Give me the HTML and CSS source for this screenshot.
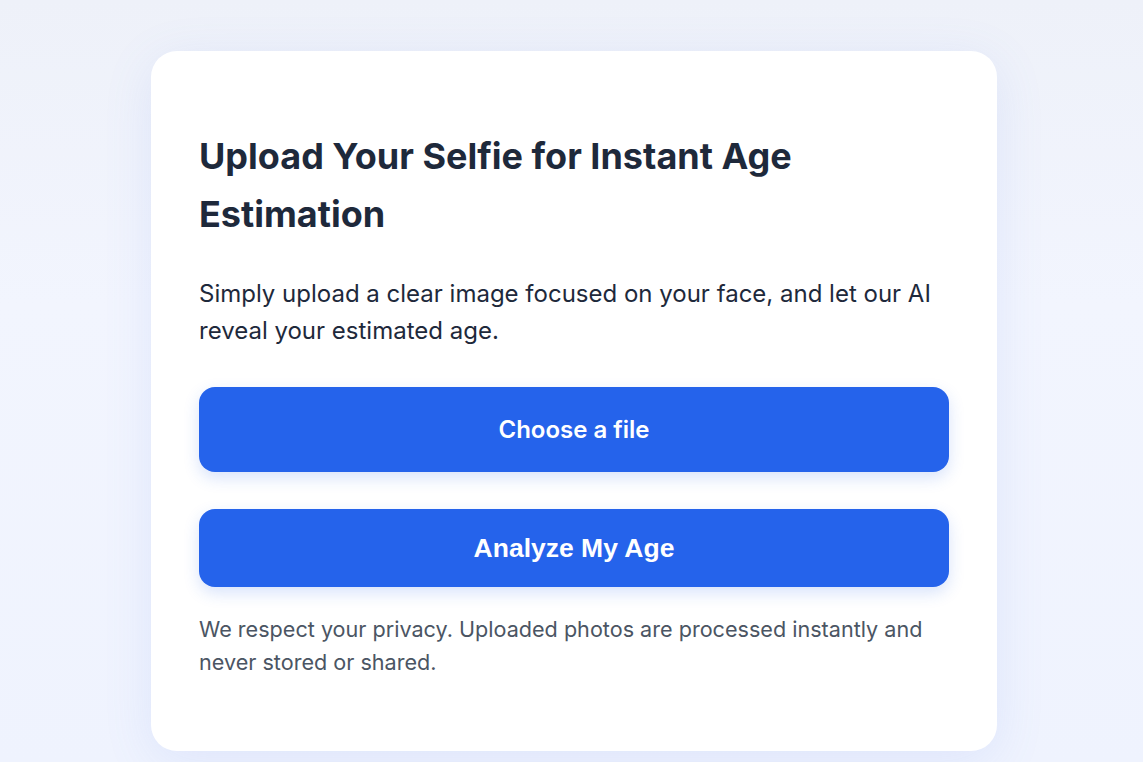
FILE: index.html
```html
<!DOCTYPE html>
<html lang="en">
<head>
<meta charset="utf-8">
<title>Age Estimation</title>
<link rel="stylesheet" href="styles.css">
</head>
<body>
<main class="page">
  <section class="card">
    <h1 class="title">Upload Your Selfie for Instant Age Estimation</h1>
    <p class="lead">Simply upload a clear image focused on your face, and let our AI reveal your estimated age.</p>
    <label class="btn btn-file">Choose a file</label>
    <button class="btn btn-analyze" type="button">Analyze My Age</button>
    <p class="note">We respect your privacy. Uploaded photos are processed instantly and never stored or shared.</p>
  </section>
</main>
</body>
</html>
```

FILE: styles.css
```css
* { box-sizing: border-box; }
html, body { margin: 0; padding: 0; }
body {
  font-family: Inter, "Noto Sans", sans-serif;
  background: linear-gradient(180deg, #eef1f9 0%, #f2f5fe 40%, #eff3fe 100%);
  min-height: 762px;
  overflow: hidden;
}
.page {
  display: flex;
  justify-content: center;
  padding: 51px 0 0 5px;
}
.card {
  width: 846px;
  background: #ffffff;
  border-radius: 26px;
  padding: 77px 48px 72px;
  box-shadow: 0 10px 50px rgba(99, 130, 230, 0.12);
  display: flex;
  flex-direction: column;
}
.title {
  margin: 0 0 32px;
  font-size: 36px;
  font-weight: 700;
  line-height: 57.5px;
  color: #1e293b;
}
.lead {
  margin: 0 0 38px;
  font-size: 24px;
  line-height: 37px;
  color: #1e293b;
}
.btn {
  display: flex;
  align-items: center;
  justify-content: center;
  width: 100%;
  border: 0;
  border-radius: 16px;
  background: #2563eb;
  color: #ffffff;
  box-shadow: 0 6px 16px rgba(37, 99, 235, 0.18);
  cursor: pointer;
}
.btn-file {
  height: 85px;
  font-size: 24px;
  font-weight: 600;
  margin-bottom: 37px;
}
.btn-analyze {
  height: 78px;
  font-family: "Liberation Sans", Arial, sans-serif;
  font-size: 26.5px;
  font-weight: 700;
}
.note {
  margin: 26px 0 0;
  font-size: 21.6px;
  line-height: 33px;
  color: #4b5563;
}
```
